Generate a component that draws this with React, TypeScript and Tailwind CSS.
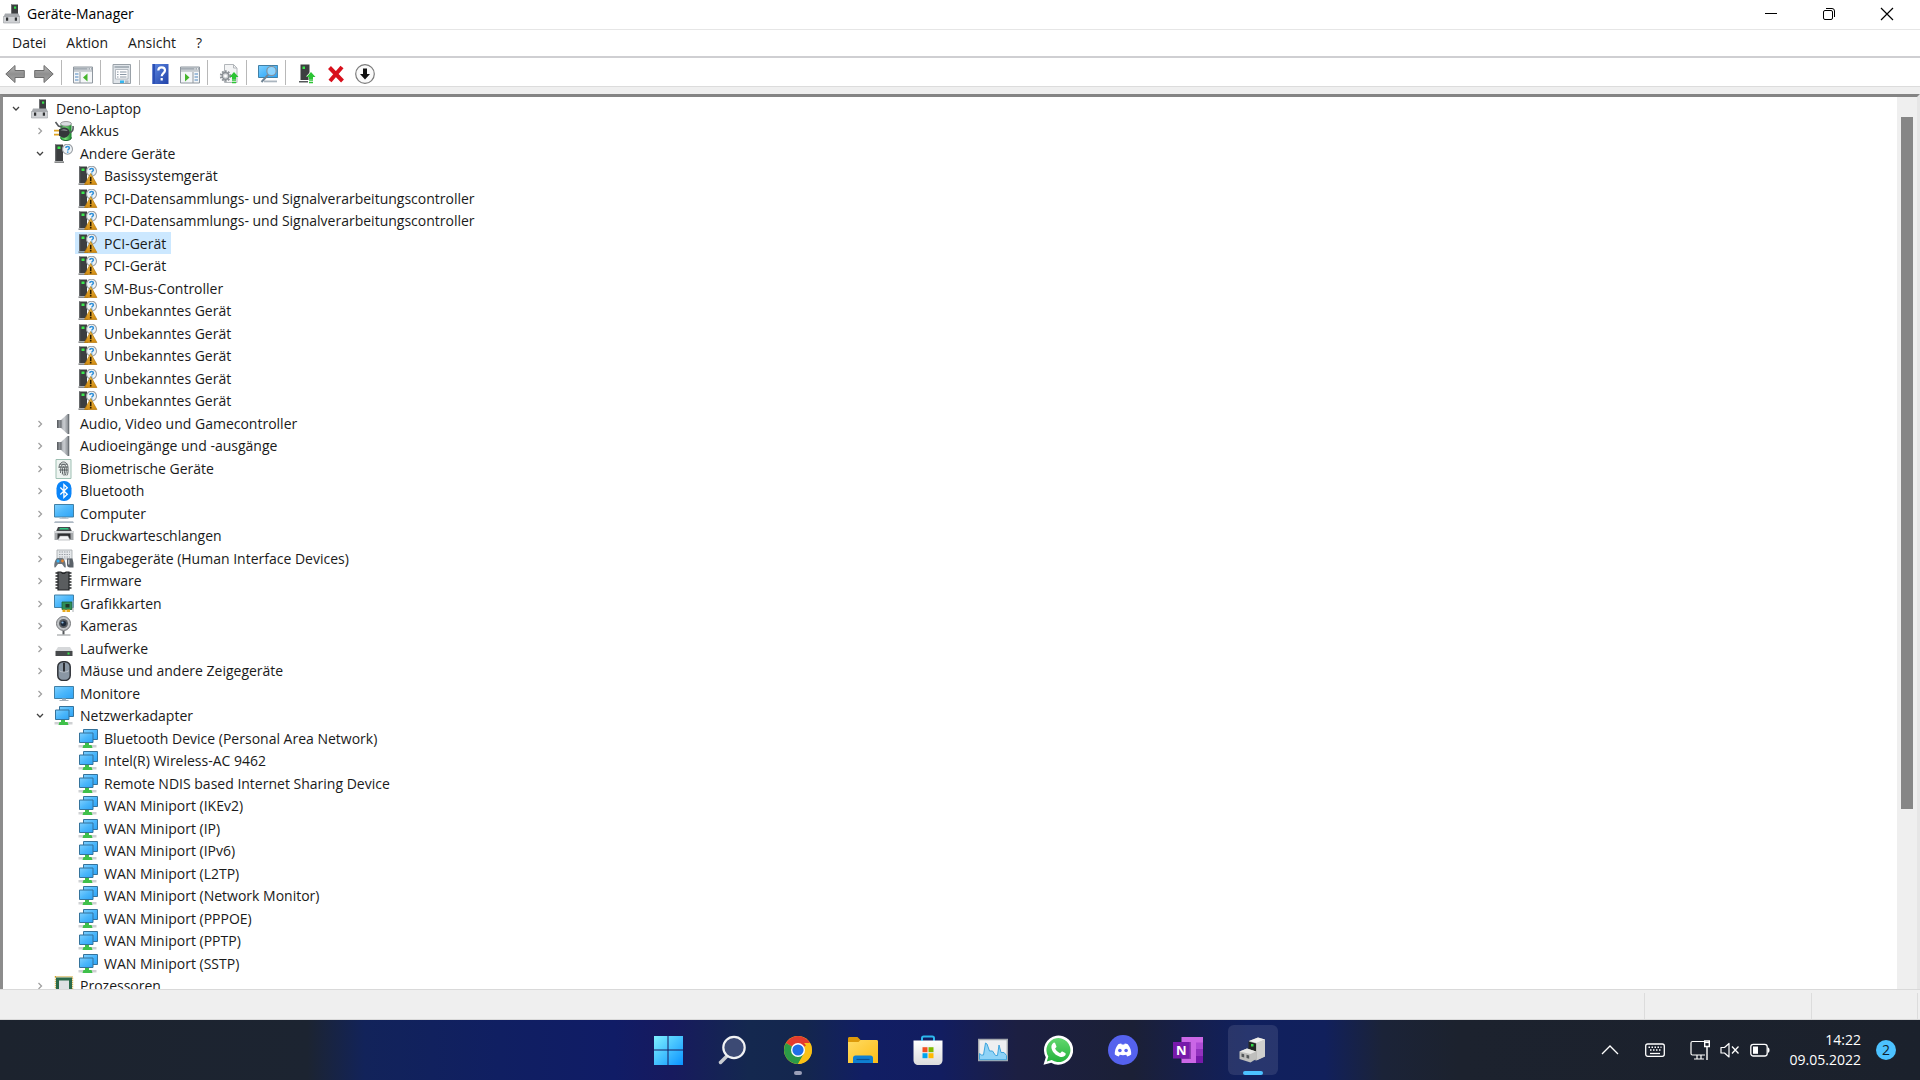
import { useState } from 'react'
import type { ReactNode } from 'react'
import clsx from 'clsx'

type IconProps = { children: ReactNode; size?: 'sm' | 'lg' }

function Icon({ children, size = 'sm' }: IconProps) {
  return (
    <svg
      viewBox={size === 'lg' ? '0 0 30 30' : '0 0 20 20'}
      className={clsx('shrink-0', size === 'lg' ? 'h-[30px] w-[30px]' : 'h-5 w-5')}
      fill="none"
      aria-hidden="true"
    >
      {children}
    </svg>
  )
}

// Gradients shared by all small icons
function IconDefs() {
  return (
    <svg className="absolute h-0 w-0" aria-hidden="true">
      <defs>
        <linearGradient id="screen" x1="0" y1="0" x2="1" y2="1">
          <stop offset="0" stopColor="#7fd0ff" />
          <stop offset="0.5" stopColor="#4bb7fb" />
          <stop offset="1" stopColor="#2ea3f5" />
        </linearGradient>
        <linearGradient id="metal" x1="0" y1="0" x2="1" y2="0">
          <stop offset="0" stopColor="#a4a8ad" />
          <stop offset="0.4" stopColor="#c9ccd0" />
          <stop offset="1" stopColor="#7d8287" />
        </linearGradient>
        <linearGradient id="arrow" x1="0" y1="0" x2="0" y2="1">
          <stop offset="0" stopColor="#b9b9b9" />
          <stop offset="0.5" stopColor="#8f8f8f" />
          <stop offset="1" stopColor="#a9a9a9" />
        </linearGradient>
        <linearGradient id="battery" x1="0" y1="0" x2="1" y2="0">
          <stop offset="0" stopColor="#2fae3f" />
          <stop offset="0.45" stopColor="#7be07c" />
          <stop offset="1" stopColor="#15832a" />
        </linearGradient>
        <linearGradient id="help" x1="0" y1="0" x2="1" y2="1">
          <stop offset="0" stopColor="#5b86e0" />
          <stop offset="1" stopColor="#2142a8" />
        </linearGradient>
        <linearGradient id="warn" x1="0" y1="0" x2="0" y2="1">
          <stop offset="0" stopColor="#f2bd45" />
          <stop offset="1" stopColor="#d08a10" />
        </linearGradient>
        <linearGradient id="win" x1="0" y1="0" x2="1" y2="1">
          <stop offset="0" stopColor="#7ff0ff" />
          <stop offset="1" stopColor="#0a93ff" />
        </linearGradient>
        <linearGradient id="folder" x1="0" y1="0" x2="1" y2="1">
          <stop offset="0" stopColor="#ffdb63" />
          <stop offset="1" stopColor="#fdbd17" />
        </linearGradient>
        <linearGradient id="bag" x1="0" y1="0" x2="0" y2="1">
          <stop offset="0" stopColor="#ffffff" />
          <stop offset="1" stopColor="#dcdcdc" />
        </linearGradient>
        <linearGradient id="whatsapp" x1="0" y1="0" x2="0" y2="1">
          <stop offset="0" stopColor="#62d86f" />
          <stop offset="1" stopColor="#25b23c" />
        </linearGradient>
      </defs>
    </svg>
  )
}

/* ---------- Tree icons ---------- */

const RootIcon = () => (
  <Icon>
    <path d="M9 0.5h7V10H9z" fill="#3b3d3f" />
    <path d="M9 0.5h1V10H9z" fill="#6b6d6f" />
    <path d="M12 2.5h2.2v2.2H12z" fill="#35e04a" />
    <path d="M3 9.500h13.500l1.500 3.500H1.500z" fill="#a6a9ad" />
    <path d="M1.500 12.500h16v6.500h-16z" fill="#cfd1d4" stroke="#9a9da1" strokeWidth="0.6" />
    <path d="M4 13.500h2.200v3.300H4zM12.800 13.500H15v3.300h-2.200z" fill="#2f3133" />
  </Icon>
)

const BatteryIcon = () => (
  <Icon>
    <path d="M6.500 3.500v13c0 4 11 4 11 0v-13z" fill="url(#battery)" />
    <ellipse cx="12" cy="2.800" rx="5.500" ry="2.300" fill="#d9dcdf" stroke="#777" strokeWidth="0.7" />
    <path d="M6.500 16.500c0 4 11 4 11 0" stroke="#17642a" strokeWidth="1" />
    <path d="M1.500 1l3 4 4 1.200M14 12c4.500-.5 5.500-3 5-7" stroke="#54585c" strokeWidth="1.6" />
    <path d="M0 9.700h5M0 13.700h5" stroke="#e0a422" strokeWidth="1.7" />
    <path d="M5 8.300l4-1.600c3.500-.5 6.500 1.500 6.500 4.500s-3 6-6.500 5.500l-4-2z" fill="#34373a" />
    <path d="M6.500 9.300l3-1c2-.2 3.500.6 4.200 1.600z" fill="#8b9095" />
  </Icon>
)

const Tower = () => (
  <>
    <path d="M1 0.500h8V17H1z" fill="#3c3e40" />
    <path d="M1 0.500h1.200V17H1z" fill="#66696b" />
    <path d="M3.500 2.500h3v2.500H3.500z" fill="#3be84d" />
    <path d="M0.500 17.500h9.500v1.200H.5z" fill="#55585a" />
  </>
)

const QuestionBadge = () => (
  <>
    <circle cx="13.500" cy="5.200" r="5" fill="#eff3f6" stroke="#9a9fa4" strokeWidth="1.100" />
    <path d="M11.800 4c.1-2 3.600-2 3.600 0 0 1.200-1.700 1.300-1.700 2.600M13.700 7.500v1.200" stroke="#2d8fd8" strokeWidth="1.500" />
  </>
)

const OtherIcon = () => (
  <Icon>
    <Tower />
    <QuestionBadge />
  </Icon>
)

const WarnIcon = () => (
  <Icon>
    <Tower />
    <QuestionBadge />
    <path d="M12.700 7.500L18.900 18.500H6.500z" fill="url(#warn)" stroke="#b5770c" strokeWidth="0.700" strokeLinejoin="round" />
    <path d="M12.700 10.800v4.200M12.700 15.800v1.600" stroke="#2a1c00" strokeWidth="1.600" />
  </Icon>
)

const SpeakerIcon = () => (
  <Icon>
    <path d="M3 6h6v8H3z" fill="#8d9196" />
    <path d="M3 6h1.500v8H3z" fill="#5d6165" />
    <path d="M7 6l6.500-6H15v20h-1.500L7 14z" fill="url(#metal)" />
    <path d="M14 0h1.300v20H14z" fill="#6d7277" />
    <path d="M6.500 6h1v8h-1z" fill="#686c71" />
  </Icon>
)

const FingerprintIcon = () => (
  <Icon>
    <path d="M2 0.500h15v19H2z" fill="#eef4f1" stroke="#9dbfb2" />
    <g stroke="#4d5256" strokeWidth="0.900">
      <path d="M5 9c0-8 9-8 9 0v3.500c0 1.500-.5 3-1.200 4" />
      <path d="M6.500 14c.5-2 .3-3.500.3-5 0-4.600 5.400-4.600 5.400 0 0 2.500.3 4.500-1.200 7.500" />
      <path d="M8.300 15.500c.5-2 .3-4 .3-6.300 0-1.700 1.900-1.700 1.900 0 0 2.600.1 4.500-.7 7.300" />
      <path d="M5.500 5.200h8M5 8h9M5.200 11h8.700" />
    </g>
  </Icon>
)

const BluetoothIcon = () => (
  <Icon>
    <rect x="2.500" y="0" width="15" height="20" rx="7.200" fill="#0a84f8" />
    <path d="M6.300 6.500l7 6.700-3.400 3.300v-13l3.400 3.300-7 6.700" stroke="#fff" strokeWidth="1.300" />
  </Icon>
)

const ComputerIcon = () => (
  <Icon>
    <path d="M0.500 0.500h19v12.500H.5z" fill="url(#screen)" stroke="#4180a6" />
    <path d="M8 13h4v1.500H8z" fill="#9db0be" />
    <path d="M5.500 14.100h9v.9h-9z" fill="#b9c4cd" />
    <path d="M1 17.200h18l1 1.800H0z" fill="#aeb9c4" />
  </Icon>
)

const PrinterIcon = () => (
  <Icon>
    <path d="M4 1h12l2 4.500H2z" fill="#45484b" />
    <path d="M6 2h8l1 1.500H5z" fill="#32c983" />
    <path d="M0.500 5h19v9H.5z" fill="#a5a8ab" />
    <path d="M0.500 5h19v2H.5z" fill="#d5d7d9" />
    <path d="M3.500 7.500h13V13h-13z" fill="#2c2e30" />
    <path d="M6 10h8l2 4H4z" fill="#f3f4f5" stroke="#8b8e91" strokeWidth="0.500" />
  </Icon>
)

const HidIcon = () => (
  <Icon>
    <path d="M3 1h15v9H3z" fill="#e5e8ea" stroke="#a2a7ab" strokeWidth="0.800" />
    <path d="M5 3h11M5 5.500h11M5 8h11" stroke="#9ba1a6" strokeWidth="1.200" strokeDasharray="1.500 1" />
    <path d="M0.500 18.500c-.8-3 .5-8.500 3-9.500h5c2 1 3.500 5 3.200 9.500-1.800.5-2.500-2.500-3.700-3.500h-4c-1.200 1-2 4-3.500 3.500z" fill="#6d757c" />
    <circle cx="4" cy="12" r="1.500" fill="#33b1f5" />
    <circle cx="8.500" cy="12" r="1.400" fill="#e8862e" />
    <path d="M13 9.500h5.500l1 4.500v4.500H16c-2 0-3-1-3-3z" fill="#5a6168" />
    <path d="M14 10.500h1.500v5H14z" fill="#b5bcc2" />
  </Icon>
)

const FirmwareIcon = () => (
  <Icon>
    <path d="M1.500 2h16M1.500 5h16M1.500 8h16M1.500 11h16M1.500 14h16M1.500 17h16" stroke="#26282a" strokeWidth="1.500" />
    <path d="M4 1h3l1.500 1.500h2L12 1h3v18H4z" fill="#5a5d5f" stroke="#242628" strokeWidth="1.200" />
  </Icon>
)

const GraphicsIcon = () => (
  <Icon>
    <path d="M0.500 1h19v12.500H.5z" fill="url(#screen)" stroke="#4180a6" />
    <path d="M8 8h10v7.500H8z" fill="#2f8f58" stroke="#1d6139" strokeWidth="0.800" />
    <path d="M11.500 10h4v3.500h-4z" fill="#20372a" />
    <path d="M18.500 6.500h1V18h-1z" fill="#a7adb2" />
    <path d="M8.500 15.500h3V18h-3zM12.500 15.500H16V18h-3.500z" fill="#e8a919" />
  </Icon>
)

const CameraIcon = () => (
  <Icon>
    <circle cx="9.500" cy="7.500" r="7" fill="#bfc2c5" stroke="#77797c" />
    <circle cx="9.500" cy="7.500" r="4.500" fill="#5a5e62" />
    <circle cx="9.500" cy="7.500" r="2.800" fill="#1e2b3a" />
    <circle cx="8.500" cy="6.500" r="1.100" fill="#8cb9e2" />
    <path d="M8.500 15h2v3.500h-2z" fill="#55585b" />
    <path d="M3 18.500h13.500v1H3z" fill="#8f9295" />
  </Icon>
)

const DriveIcon = () => (
  <Icon>
    <path d="M4 8h12l2.500 4h-17z" fill="#d6d8da" />
    <path d="M1.500 12h17v5h-17z" fill="#46494b" />
    <path d="M13.500 13.500h2v2h-2z" fill="#37e04b" />
  </Icon>
)

const MouseIcon = () => (
  <Icon>
    <rect x="3.800" y="0.800" width="12.400" height="18.600" rx="5" fill="#8a97a4" stroke="#303338" strokeWidth="1.500" />
    <path d="M5 9.500c2 2 8 2 10 0" stroke="#c6ccd1" strokeWidth="0.800" />
    <path d="M9 2h2v8.500H9z" fill="#2b2e32" />
  </Icon>
)

const MonitorIcon = () => (
  <Icon>
    <path d="M0.500 2.500h19v12H.5z" fill="url(#screen)" stroke="#4180a6" />
    <path d="M8 14.500h4v1.700H8z" fill="#9db0be" />
    <path d="M5.500 16h9v1h-9z" fill="#a3afb9" />
  </Icon>
)

const NetworkIcon = () => (
  <Icon>
    <path d="M5.500 0.500h14v10h-14z" fill="url(#screen)" stroke="#35739c" />
    <path d="M1.500 4h13.500v9.500H1.500z" fill="url(#screen)" stroke="#35739c" />
    <path d="M0.500 16h18v2.500H.5z" fill="#cfd1d3" />
    <path d="M7 14h4v2h2.500l1 3H4.500l1-3H7z" fill="#3fc04a" />
  </Icon>
)

const CpuIcon = () => (
  <Icon>
    <path d="M1.500 0.800h17v18.500h-17z" stroke="#c9a02a" strokeWidth="1.400" strokeDasharray="1 1" />
    <path d="M2 1.500h16v17H2z" fill="#2b6a4a" />
    <path d="M5 4.500h10v11H5z" fill="#dfe1e3" />
  </Icon>
)

/* ---------- Toolbar icons ---------- */

const BackIcon = () => (
  <Icon>
    <path d="M0.800 10L10 1.500v5h9.300v7H10v5z" fill="url(#arrow)" stroke="#6d6d6d" />
  </Icon>
)

const ForwardIcon = () => (
  <Icon>
    <path d="M19.200 10L10 1.500v5H.7v7H10v5z" fill="url(#arrow)" stroke="#6d6d6d" />
  </Icon>
)

function PaneWindow({ flip }: { flip?: boolean }) {
  return (
    <Icon>
      <path d="M0.500 3h19v16H.5z" fill="#f4f6f8" stroke="#8f979f" />
      <path d="M1 3.500h18v4H1z" fill="#a5adb5" />
      <path d="M1 6.200h18" stroke="#dfe3e6" strokeWidth="0.800" />
      <path d="M14.500 4.800h1M17 4.800h1" stroke="#fff" strokeWidth="1.200" />
      {flip ? (
        <>
          <path d="M13 8v11" stroke="#8f979f" />
          <path d="M14.500 10h3.500M14.500 13h3.500M14.500 16h3.500" stroke="#4d86bd" strokeWidth="1.200" />
          <path d="M5 9.500l4.500 4-4.500 4z" fill="#45b52c" />
        </>
      ) : (
        <>
          <path d="M7 8v11" stroke="#8f979f" />
          <path d="M2 10h3.500M2 13h3.500M2 16h3.500" stroke="#4d86bd" strokeWidth="1.200" />
          <path d="M14.500 9.500l-4.500 4 4.500 4z" fill="#45b52c" />
        </>
      )}
    </Icon>
  )
}

const PropertiesIcon = () => (
  <Icon>
    <path d="M1 0.500h17.500v19H1z" fill="#dfe4e9" stroke="#99a1a8" />
    <path d="M2.500 2h14.500v2H2.500z" fill="#aab3bb" />
    <path d="M3.500 5.500h12.500v9.500H3.500z" fill="#fdfdfe" stroke="#a4acb4" strokeWidth="0.800" />
    <path d="M5 8h1.500M5 10.500h1.500M5 13h1.500M8 8h6.500M8 10.500h6.500M8 13h6.500" stroke="#8b98a5" />
    <path d="M8 16.500h4V19H8z" fill="#35b7f0" />
    <path d="M13 16.500h3.500V19H13z" fill="#b5bdc5" />
  </Icon>
)

const HelpIcon = () => (
  <Icon>
    <path d="M1.500 0h16v20h-16z" fill="url(#help)" />
    <path d="M1.500 0h2.500v20H1.500z" fill="#2b4fb5" />
    <path d="M7.300 6.500c0-4.300 6.700-4.300 6.700 0 0 2.600-3.300 2.800-3.300 5.800M10.700 14v2.500" stroke="#fff" strokeWidth="2.200" />
  </Icon>
)

const GreenUp = () => (
  <>
    <path d="M15 8l4.500 5H17v2h-4v-2h-2.500z" fill="#2cc434" />
    <path d="M13 16h4M13 18.500h4" stroke="#2cc434" strokeWidth="1.600" />
  </>
)

const UpdateIcon = () => (
  <Icon>
    <path d="M5.500 0.500h9l3.500 3.500v14.500H5.500z" fill="#f3f4f5" stroke="#b2b6ba" />
    <path d="M14.500 0.500V4H18" stroke="#b2b6ba" />
    <circle cx="6.500" cy="12" r="4.700" stroke="#8e9398" strokeWidth="2" strokeDasharray="1.800 1.200" />
    <circle cx="6.500" cy="12" r="3.300" fill="#cfd2d5" stroke="#868b90" strokeWidth="1.200" />
    <circle cx="6.500" cy="12" r="1.400" fill="#fff" />
    <GreenUp />
  </Icon>
)

const ScanIcon = () => (
  <Icon>
    <path d="M0.500 1.500h19.200v12H.5z" fill="url(#screen)" stroke="#4180a6" />
    <path d="M6 16.500h13v1.800H6z" fill="#aab5bf" />
    <circle cx="13.500" cy="7" r="4.700" fill="#9fdcff" fillOpacity="0.800" stroke="#8294a3" strokeWidth="1.300" />
    <path d="M10 10.800L3.500 18" stroke="#6f8495" strokeWidth="2" />
  </Icon>
)

const DriverIcon = () => (
  <Icon>
    <path d="M3.500 0.500h9V16h-9z" fill="#3c3e40" />
    <path d="M5.500 2.500h2.500v2.500H5.500z" fill="#3be84d" />
    <path d="M2 17h9v1.500H2z" fill="#55585a" />
    <path d="M14 7l5 5.500h-2.500V19h-5v-6.500H9z" fill="#fff" />
    <path d="M14 8l4.500 5H16v2h-4v-2H9.500z" fill="#2cc434" />
    <path d="M12 16h4M12 18.500h4" stroke="#2cc434" strokeWidth="1.600" />
  </Icon>
)

const RemoveIcon = () => (
  <Icon>
    <path d="M3.500 3.500L16.500 17M16 3L4 17" stroke="#d8101c" strokeWidth="4" />
  </Icon>
)

const DownIcon = () => (
  <Icon>
    <circle cx="10" cy="10" r="9.300" fill="#fafafa" stroke="#7b7b7b" strokeWidth="1.200" />
    <path d="M8 4.500h4V10h3l-5 5.500L5 10h3z" fill="#111" />
  </Icon>
)

const toolbar: { label: string; icon?: () => ReactNode }[] = [
  { label: 'Zurück', icon: BackIcon },
  { label: 'Vorwärts', icon: ForwardIcon },
  { label: 'sep-1' },
  { label: 'Konsolenstruktur ein-/ausblenden', icon: () => <PaneWindow /> },
  { label: 'sep-2' },
  { label: 'Eigenschaften', icon: PropertiesIcon },
  { label: 'sep-3' },
  { label: 'Hilfe', icon: HelpIcon },
  { label: 'Aktionsbereich ein-/ausblenden', icon: () => <PaneWindow flip /> },
  { label: 'sep-4' },
  { label: 'Treiber aktualisieren', icon: UpdateIcon },
  { label: 'sep-5' },
  { label: 'Nach geänderter Hardware suchen', icon: ScanIcon },
  { label: 'sep-6' },
  { label: 'Treiber hinzufügen', icon: DriverIcon },
  { label: 'Gerät deinstallieren', icon: RemoveIcon },
  { label: 'Gerät deaktivieren', icon: DownIcon },
]

type Node = { name: string; level: 0 | 1 | 2; icon: () => ReactNode; open?: boolean }

const group = (name: string, icon: () => ReactNode, open = false): Node => ({ name, level: 1, icon, open })
const device = (name: string, icon: () => ReactNode): Node => ({ name, level: 2, icon })

const nodes: Node[] = [
  { name: 'Deno-Laptop', level: 0, icon: RootIcon, open: true },
  group('Akkus', BatteryIcon),
  group('Andere Geräte', OtherIcon, true),
  device('Basissystemgerät', WarnIcon),
  device('PCI-Datensammlungs- und Signalverarbeitungscontroller', WarnIcon),
  device('PCI-Datensammlungs- und Signalverarbeitungscontroller', WarnIcon),
  device('PCI-Gerät', WarnIcon),
  device('PCI-Gerät', WarnIcon),
  device('SM-Bus-Controller', WarnIcon),
  device('Unbekanntes Gerät', WarnIcon),
  device('Unbekanntes Gerät', WarnIcon),
  device('Unbekanntes Gerät', WarnIcon),
  device('Unbekanntes Gerät', WarnIcon),
  device('Unbekanntes Gerät', WarnIcon),
  group('Audio, Video und Gamecontroller', SpeakerIcon),
  group('Audioeingänge und -ausgänge', SpeakerIcon),
  group('Biometrische Geräte', FingerprintIcon),
  group('Bluetooth', BluetoothIcon),
  group('Computer', ComputerIcon),
  group('Druckwarteschlangen', PrinterIcon),
  group('Eingabegeräte (Human Interface Devices)', HidIcon),
  group('Firmware', FirmwareIcon),
  group('Grafikkarten', GraphicsIcon),
  group('Kameras', CameraIcon),
  group('Laufwerke', DriveIcon),
  group('Mäuse und andere Zeigegeräte', MouseIcon),
  group('Monitore', MonitorIcon),
  group('Netzwerkadapter', NetworkIcon, true),
  device('Bluetooth Device (Personal Area Network)', NetworkIcon),
  device('Intel(R) Wireless-AC 9462', NetworkIcon),
  device('Remote NDIS based Internet Sharing Device', NetworkIcon),
  device('WAN Miniport (IKEv2)', NetworkIcon),
  device('WAN Miniport (IP)', NetworkIcon),
  device('WAN Miniport (IPv6)', NetworkIcon),
  device('WAN Miniport (L2TP)', NetworkIcon),
  device('WAN Miniport (Network Monitor)', NetworkIcon),
  device('WAN Miniport (PPPOE)', NetworkIcon),
  device('WAN Miniport (PPTP)', NetworkIcon),
  device('WAN Miniport (SSTP)', NetworkIcon),
  group('Prozessoren', CpuIcon),
]

const indent = ['pl-0', 'pl-6', 'pl-12']

/* ---------- Taskbar icons ---------- */

const StartIcon = () => (
  <Icon size="lg">
    <path d="M1 1h13.500v13.500H1zM15.500 1H30v13.500H15.500zM1 15.500h13.500V30H1zM15.500 15.500H30V30H15.500z" fill="url(#win)" />
  </Icon>
)

const SearchIcon = () => (
  <Icon size="lg">
    <path d="M10 20L2.500 27.500" stroke="#c9ccd2" strokeWidth="3.500" strokeLinecap="round" />
    <circle cx="16" cy="12.500" r="10.700" fill="#3c4a74" stroke="#f1f2f4" strokeWidth="2.200" />
  </Icon>
)

const ChromeIcon = () => (
  <Icon size="lg">
    <circle cx="15" cy="15" r="14" fill="#fbc116" />
    <path d="M15 15L2.900 8A14 14 0 0 1 27.100 8z" fill="#e33b2e" />
    <path d="M2.900 8a14 14 0 0 0 12.100 21l6-10.500L15 15z" fill="#2b9a47" />
    <path d="M15 8h12.100L15 15z" fill="#e33b2e" />
    <path d="M15 29l6.100-10.500A7 7 0 0 0 21.100 8H27a14 14 0 0 1-12 21z" fill="#fbc116" />
    <circle cx="15" cy="15" r="7" fill="#fff" />
    <circle cx="15" cy="15" r="5.600" fill="#1f6fe8" />
  </Icon>
)

const ExplorerIcon = () => (
  <Icon size="lg">
    <path d="M0 3.500C0 2.500.7 2 1.500 2h8l3 3H20v4H0z" fill="#dd9a0a" />
    <path d="M0 7h10.500l2-2H28.500c1 0 1.500.6 1.500 1.500V28H0z" fill="url(#folder)" />
    <path d="M5 28v-5c0-1.500 1-2.500 2.500-2.500h15c1.500 0 2.500 1 2.500 2.500v5z" fill="#0f7fd2" />
    <path d="M8.500 24.500h13" stroke="#0a4f92" strokeWidth="1.200" />
  </Icon>
)

const StoreIcon = () => (
  <Icon size="lg">
    <path d="M9 7V3.200C9 2 9.500 1.500 10.700 1.500h8.600C20.500 1.500 21 2 21 3.200V7" stroke="#2db8ee" strokeWidth="2" />
    <path d="M0.500 5.500h29V25c0 3-2 5-5 5h-19c-3 0-5-2-5-5z" fill="url(#bag)" />
    <path d="M9 5.500V3.200" stroke="#2db8ee" strokeWidth="2" />
    <path d="M9.500 12.200h5v5h-5z" fill="#f25022" />
    <path d="M15.500 12.200h5v5h-5z" fill="#7fba00" />
    <path d="M9.500 18.200h5v5h-5z" fill="#00a4ef" />
    <path d="M15.500 18.200h5v5h-5z" fill="#ffb900" />
  </Icon>
)

const MonitorAppIcon = () => (
  <Icon size="lg">
    <path d="M0.700 4.500h28.600v21H.7z" fill="#eeeff1" stroke="#a5a9ae" strokeWidth="1.400" />
    <path d="M1.500 24.700v-6.200l2 1.500h2L7.500 8l1.500 1 2.500 7 3 0 3 4.500h2L21 10l2 7.500 3 0 2.500 3v4.200z" fill="#8fd3f7" stroke="#3fa4dc" />
  </Icon>
)

const WhatsAppIcon = () => (
  <Icon size="lg">
    <path d="M0.500 29.800l2.300-7.600a14.600 14.600 0 1 1 5.400 5.500z" fill="#fff" />
    <path d="M3.800 26.500l1.500-5a12 12 0 1 1 3.400 3.500z" fill="url(#whatsapp)" />
    <path d="M10 8.200c.8-.9 1.800-.7 2.200.1l1.200 2.900c.2.600-.1 1-1.300 2.400 1 2.200 2.700 3.700 5 4.600 1.400-1.700 1.700-2 2.300-1.700l2.800 1.400c.8.400.6 1.700-.1 2.700-1 1.300-3 1.900-5.300 1.100-4.300-1.500-7.500-4.800-8.300-8.500-.4-2.200.3-3.900 1.500-5z" fill="#fff" />
  </Icon>
)

const DiscordIcon = () => (
  <Icon size="lg">
    <circle cx="15" cy="15" r="15" fill="#5562ee" />
    <path
      d="M10.200 9.300c1-.5 2.200-.8 3-.9l.6 1h2.400l.6-1c1 .1 2 .4 3 .9 2.600 3.200 3.700 7 3.400 10.300-1.300.9-2.600 1.500-4 1.900l-1-1.700c-1.900.5-4.500.5-6.400 0l-1 1.700c-1.400-.4-2.700-1-4-1.900-.3-3.300.8-7.100 3.400-10.300z"
      fill="#fff"
    />
    <circle cx="11.900" cy="15.500" r="1.800" fill="#5562ee" />
    <circle cx="18.100" cy="15.500" r="1.800" fill="#5562ee" />
  </Icon>
)

const OneNoteIcon = () => (
  <Icon size="lg">
    <path d="M8.500 2h21.500v26H8.500z" fill="#cb67e6" />
    <path d="M23 7.500h7V14h-7z" fill="#ae4bd5" />
    <path d="M23 14h7v7h-7z" fill="#9332bf" />
    <path d="M23 21h7v7h-7z" fill="#7719aa" />
    <path d="M8.500 7h9.500v17H8.500z" fill="#8e3fb0" />
    <path d="M0 7h16.500v16.500H0z" fill="#7719aa" />
    <text x="8.200" y="19.500" textAnchor="middle" fontFamily="Open Sans" fontWeight="700" fontSize="13" fill="#fff">
      N
    </text>
  </Icon>
)

const DeviceManagerIcon = () => (
  <Icon size="lg">
    <path d="M11 6L20 2.500l7 2v17L18 25.500l-7-2z" fill="#a9a9a7" />
    <path d="M18.500 8L27 4.500v17l-8.500 4z" fill="#cfcfcd" />
    <path d="M11 6L20 2.500l7 2L18.500 8z" fill="#efefed" />
    <path d="M10.500 6.500l7.500 2v8l-7.500-2z" fill="#222624" />
    <path d="M13 9h2.500v2.500H13z" fill="#30d944" />
    <path d="M1.500 16.500L9 13.500l9 3v7.500l-5.500 3.500-11-3.500z" fill="#bfbfbd" />
    <path d="M1.500 16.500L9 13.500l9 3-5.500 2.500z" fill="#e6e6e4" />
    <path d="M3.500 18.500l2.700.7v3.300l-2.700-.7zM8.500 19.800l2.700.7v3.300l-2.700-.7z" fill="#55585a" />
  </Icon>
)

const apps: { label: string; icon: () => ReactNode; state?: 'running' | 'active' }[] = [
  { label: 'Start', icon: StartIcon },
  { label: 'Suche', icon: SearchIcon },
  { label: 'Google Chrome', icon: ChromeIcon, state: 'running' },
  { label: 'Explorer', icon: ExplorerIcon },
  { label: 'Microsoft Store', icon: StoreIcon },
  { label: 'Ressourcenmonitor', icon: MonitorAppIcon },
  { label: 'WhatsApp', icon: WhatsAppIcon },
  { label: 'Discord', icon: DiscordIcon },
  { label: 'OneNote', icon: OneNoteIcon },
  { label: 'Geräte-Manager', icon: DeviceManagerIcon, state: 'active' },
]

function TreeRow({ node, selected, onSelect }: { node: Node; selected: boolean; onSelect: () => void }) {
  return (
    <li
      role="treeitem"
      aria-level={node.level + 1}
      aria-selected={selected}
      className={clsx('flex items-start odd:h-[22px] even:h-[23px]', indent[node.level])}
    >
      {node.open === undefined ? (
        <span className="w-6" />
      ) : (
        <button aria-label={node.name} className="flex h-[22px] w-6 items-center justify-center pt-0.5 pl-0.5">
          <svg viewBox="0 0 10 10" className="h-2.5 w-2.5" fill="none" strokeWidth="1.300">
            {node.open ? (
              <path d="M2 3l3 3 3-3" stroke="#404040" />
            ) : (
              <path d="M3.500 2l3 3-3 3" stroke="#a0a0a0" />
            )}
          </svg>
        </button>
      )}
      <button
        onClick={onSelect}
        className={clsx('flex h-[22px] items-center gap-1.5 pt-0.5 pr-[5px] pl-[3px]', selected && 'bg-[#cce8ff]')}
      >
        <node.icon />
        <span className="leading-5 whitespace-nowrap">{node.name}</span>
      </button>
    </li>
  )
}

export default function App() {
  const [selected, setSelected] = useState(6)

  return (
    <div className="flex h-screen flex-col overflow-hidden bg-white font-['Open_Sans','Noto_Sans',sans-serif] text-sm text-[#1a1a1a]">
      <IconDefs />

      {/* Title bar */}
      <header className="flex h-[29px] shrink-0 items-center justify-between pr-1 pb-px pl-0.5">
        <div className="flex items-center gap-[5px] text-black">
          <RootIcon />
          <h1 className="leading-5">Geräte-Manager</h1>
        </div>
        <div className="flex h-full">
          <button aria-label="Minimieren" className="flex w-[58px] items-center justify-center">
            <svg viewBox="0 0 14 14" className="h-3.5 w-3.5" fill="none" stroke="#000">
              <path d="M1 6.500h12" />
            </svg>
          </button>
          <button aria-label="Verkleinern" className="flex w-[58px] items-center justify-center">
            <svg viewBox="0 0 14 14" className="h-3.5 w-3.5" fill="none" stroke="#000">
              <rect x="1.500" y="3.500" width="9" height="9" rx="1.500" />
              <path d="M4 1.500h6A2.500 2.500 0 0 1 12.500 4v6" />
            </svg>
          </button>
          <button aria-label="Schließen" className="flex w-[58px] items-center justify-center">
            <svg viewBox="0 0 14 14" className="h-3.5 w-3.5" fill="none" stroke="#000" strokeWidth="1.200">
              <path d="M1 1l12 12M13 1L1 13" />
            </svg>
          </button>
        </div>
      </header>

      {/* Menu */}
      <nav className="flex h-[29px] shrink-0 items-center gap-5 border-t border-b-2 border-t-[#e6e6e6] border-b-[#cfcfd2] pl-3">
        <button>Datei</button>
        <button>Aktion</button>
        <button>Ansicht</button>
        <button>?</button>
      </nav>

      {/* Toolbar */}
      <div role="toolbar" className="flex h-[29px] shrink-0 items-center border-b border-[#dcdcdc]">
        {toolbar.map(({ label, icon: ToolIcon }) =>
          ToolIcon ? (
            <button key={label} aria-label={label} className="flex h-7 w-[29px] items-center justify-center pt-1">
              <ToolIcon />
            </button>
          ) : (
            <span key={label} className="flex h-[25px] w-2.5 pl-[3px]">
              <span className="w-px bg-[#b8b8b8]" />
            </span>
          )
        )}
      </div>
      <div className="h-[7px] shrink-0 bg-[#efefef]" />

      {/* Device tree */}
      <main className="flex min-h-0 flex-1 border-t-[3px] border-r-[3px] border-l-[3px] border-t-[#848484] border-r-[#e6e6e6] border-l-[#8c8c8c]">
        <ul role="tree" className="min-w-0 flex-1 overflow-hidden">
          {nodes.map((node, i) => (
            <TreeRow key={i} node={node} selected={i === selected} onSelect={() => setSelected(i)} />
          ))}
        </ul>
        <div className="grid w-5 grid-rows-[20px_691fr_180fr] bg-[#efefef] px-1">
          <span />
          <span className="bg-[#868686]" />
        </div>
      </main>

      {/* Status bar */}
      <footer className="flex h-[31px] shrink-0 border-y border-[#d9d9d9] bg-[#efefef] pt-[3px] pr-0.5">
        <div className="flex-1 border-r border-[#dcdcdc]" />
        <div className="w-[167px] border-r border-[#dcdcdc]" />
        <div className="w-[106px] border-r border-[#dcdcdc]" />
      </footer>

      {/* Taskbar */}
      <div className="flex h-[60px] shrink-0 items-center bg-[linear-gradient(90deg,#1c232e_0%,#1c2431_16%,#12235a_19%,#101f62_26%,#101c66_32%,#171a5e_35%,#14284f_39%,#14264e_42%,#111e64_45%,#121d60_49%,#1c1f42_53%,#1b2036_59%,#161f4c_62%,#10205e_65%,#11205c_69%,#1b2338_72%,#1c222e_76%,#1b212c_100%)] px-6 text-white">
        <div className="flex-1" />
        <nav className="flex">
          {apps.map(({ label, icon: AppIcon, state }) => (
            <div key={label} className="flex w-[65px] justify-center">
              <button
                aria-label={label}
                className={clsx(
                  'relative flex h-[50px] w-[50px] items-center justify-center rounded-md',
                  state === 'active' && 'bg-white/10'
                )}
              >
                <AppIcon />
                {state && (
                  <span
                    className={clsx(
                      'absolute bottom-0 h-1 rounded-full',
                      state === 'active' ? 'w-5 bg-[#4cc2ff]' : 'w-2 bg-[#9a9fb8]'
                    )}
                  />
                )}
              </button>
            </div>
          ))}
        </nav>

        {/* Tray */}
        <div className="flex flex-1 items-center justify-end">
          <button aria-label="Ausgeblendete Symbole einblenden" className="mr-[25px]">
            <Icon>
              <path d="M2 14l8-8 8 8" stroke="#fff" strokeWidth="1.300" />
            </Icon>
          </button>
          <button aria-label="Bildschirmtastatur" className="mr-[25px]">
            <Icon>
              <rect x="0.700" y="4" width="18.600" height="12.300" rx="2" stroke="#fff" strokeWidth="1.300" />
              <path d="M3.500 7.300h13M5 10h11" stroke="#fff" strokeWidth="1.500" strokeDasharray="1.500 1.500" />
              <path d="M5 13.500h10" stroke="#fff" strokeWidth="1.300" />
            </Icon>
          </button>
          <button aria-label="Netzwerk, Lautstärke und Akku" className="mr-5 flex gap-2.5">
            <Icon>
              <path d="M14 1.500H2.500c-1 0-1.500.5-1.500 1.500v10.500c0 1 .5 1.500 1.500 1.500H15M7 15v3.500M11 15v3.500M4 19h10" stroke="#fff" strokeWidth="1.200" />
              <path d="M14.700 1h4.600v5.500h-4.600zM17 6.500V20" stroke="#fff" strokeWidth="1.400" />
              <path d="M14.700 2.500h4.600" stroke="#fff" strokeWidth="1.200" />
            </Icon>
            <Icon>
              <path d="M1 7.500h3.500L9 3.500v13.500l-4.500-4H1z" stroke="#fff" strokeWidth="1.200" strokeLinejoin="round" />
              <path d="M12 6.500l6.500 7M18.500 6.500l-6.500 7" stroke="#fff" strokeWidth="1.300" />
            </Icon>
            <Icon>
              <rect x="0.800" y="4.300" width="16.400" height="11.700" rx="2.500" stroke="#fff" strokeWidth="1.300" />
              <path d="M3 6.500h5v7.300H3z" fill="#fff" />
              <path d="M18 7.500c2 0 2 5.300 0 5.300z" fill="#fff" />
            </Icon>
          </button>
          <button className="mr-[15px] text-right leading-5">
            14:22
            <br />
            09.05.2022
          </button>
          <button className="flex h-5 w-5 items-center justify-center rounded-full bg-[#4cc2ff] text-sm text-[#10202c]">2</button>
        </div>
      </div>
    </div>
  )
}
